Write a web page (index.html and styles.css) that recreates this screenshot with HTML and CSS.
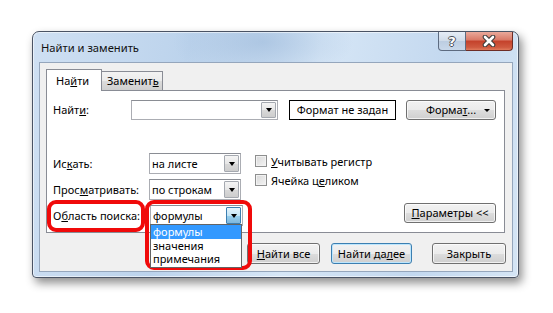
FILE: index.html
```html
<!DOCTYPE html>
<html lang="ru">
<head>
  <meta charset="UTF-8">
  <title>Найти и заменить</title>
  <link rel="stylesheet" href="styles.css">
</head>
<body>
  <div class="window">
    <div class="titlebar">
      <div class="title">Найти и заменить</div>
      <div class="title-buttons">
        <div class="help-btn">?</div>
        <div class="close-btn">
          <svg width="14" height="12" viewBox="0 0 14 12">
            <path d="M3 2 L11 10 M11 2 L3 10" stroke="#3b3b3b" stroke-width="4.6" stroke-linecap="round"/>
            <path d="M3 2 L11 10 M11 2 L3 10" stroke="#fff" stroke-width="2.6" stroke-linecap="round"/>
          </svg>
        </div>
      </div>
    </div>

    <div class="client">
      <div class="tabs">
        <div class="tab active">На<u>й</u>ти</div>
        <div class="tab">Заменит<u>ь</u></div>
      </div>

      <div class="panel">
        <div class="find-row">
          <div class="label find-label">Найт<u>и</u>:</div>
          <div class="find-input">
            <span class="field"></span>
            <span class="arrow-btn"></span>
          </div>
          <div class="format-box">Формат не задан</div>
          <div class="btn format-btn">Форма<u>т</u>...<span class="small-arrow"></span></div>
        </div>

        <div class="options">
          <div class="combo-col">
            <div class="combo-row">
              <div class="label">Ис<u>к</u>ать:</div>
              <div class="combo"><span class="field">на листе</span><span class="arrow-btn"></span></div>
            </div>
            <div class="combo-row">
              <div class="label">Прос<u>м</u>атривать:</div>
              <div class="combo"><span class="field">по строкам</span><span class="arrow-btn"></span></div>
            </div>
            <div class="combo-row">
              <div class="label">О<u>б</u>ласть поиска:</div>
              <div class="combo open">
                <span class="field">формулы</span><span class="arrow-btn hot"></span>
                <ul class="drop-list">
                  <li class="selected">формулы</li>
                  <li>значения</li>
                  <li>примечания</li>
                </ul>
              </div>
            </div>
          </div>

          <div class="check-col">
            <label class="check"><span class="box"></span><span><u>У</u>читывать регистр</span></label>
            <label class="check"><span class="box"></span><span>Ячейка ц<u>е</u>ликом</span></label>
          </div>

          <div class="btn params-btn"><u>П</u>араметры &lt;&lt;</div>
        </div>
      </div>

      <div class="bottom-row">
        <div class="btn find-all"><u>Н</u>айти все</div>
        <div class="btn find-next default">Найти да<u>л</u>ее</div>
        <div class="btn close">Закрыть</div>
      </div>
    </div>
  </div>

  <!-- red marks drawn over the screenshot -->
  <div class="mark mark-label"></div>
  <div class="mark mark-combo"></div>
</body>
</html>
```

FILE: styles.css
```css
body {
  margin: 0;
  width: 553px;
  height: 313px;
  background: #fff;
  font-family: "Noto Sans", "Open Sans", sans-serif;
  font-size: 11px;
  color: #000;
  overflow: hidden;
  position: relative;
}

u {
  text-decoration: underline;
  text-underline-offset: 1px;
}

/* aero window */
.window {
  margin: 31px 0 0 32px;
  width: 487px;
  height: 247px;
  box-sizing: border-box;
  border: 1px solid #4a5364;
  border-radius: 7px 7px 4px 4px;
  background:
    radial-gradient(ellipse 90px 40px at 230px 10px, rgba(150, 180, 215, 0.55), transparent),
    linear-gradient(100deg, #cfe0f3 0%, #bcd3ec 30%, #d6e6f6 55%, #c3d8ef 80%, #d5e5f5 100%);
  box-shadow: 3px 5px 10px rgba(0, 0, 0, 0.45), inset 0 0 0 1px rgba(255, 255, 255, 0.55);
  display: flex;
  flex-direction: column;
}

.titlebar {
  height: 30px;
  display: flex;
  justify-content: space-between;
  align-items: flex-start;
}

.title {
  padding: 8px 0 0 8px;
  line-height: 16px;
  font-size: 11.2px;
  color: #111;
}

.title-buttons {
  display: flex;
  margin-right: 5px;
}

.help-btn,
.close-btn {
  height: 19px;
  box-sizing: border-box;
  border: 1px solid #5d6b80;
  border-top: none;
  display: flex;
  justify-content: center;
  align-items: center;
}

.help-btn {
  width: 28px;
  border-radius: 0 0 0 4px;
  background: linear-gradient(#e6edf6, #cfdbe9 50%, #bccde1 51%, #c9d8ea);
  color: #fff;
  font-family: "DejaVu Sans", sans-serif;
  font-size: 13px;
  font-weight: bold;
  line-height: 17px;
  text-shadow: -1px 0 #4a4f58, 1px 0 #4a4f58, 0 -1px #4a4f58, 0 1px #4a4f58;
}

.close-btn {
  width: 47px;
  border-left: none;
  border-color: #6e2d26;
  border-radius: 0 0 4px 0;
  background: linear-gradient(#eaa99b, #d97866 45%, #c4412b 50%, #cf5a40 85%, #e07a5c);
}

.close-btn svg {
  display: block;
}

/* dialog body */
.client {
  flex: 1;
  margin: 0 5px 5px 6px;
  border: 1px solid #95a6bc;
  background: #f0f0f0;
  display: flex;
  flex-direction: column;
}

.tabs {
  display: flex;
  align-items: flex-end;
  height: 21px;
  margin: 6px 0 0 6px;
}

.tab {
  box-sizing: border-box;
  height: 19px;
  width: 61px;
  padding-left: 5px;
  line-height: 18px;
  border: 1px solid #898c95;
  border-left: none;
  border-bottom: none;
  background: linear-gradient(#f3f3f3, #ebebeb 50%, #dcdcdc 51%, #cfcfcf);
}

.tab.active {
  position: relative;
  z-index: 1;
  height: 22px;
  width: 56px;
  margin-bottom: -1px;
  padding-left: 9px;
  line-height: 21px;
  border-left: 1px solid #898c95;
  background: #fff;
}

.panel {
  height: 143px;
  box-sizing: border-box;
  margin: 0 7px 0 6px;
  padding: 9px 8px 0 6px;
  border: 1px solid #898c95;
  background: #fff;
}

.label {
  width: 96px;
  line-height: 21px;
  white-space: nowrap;
}

.find-row {
  display: flex;
  height: 20px;
}

.find-label {
  width: 78px;
  line-height: 20px;
}

.find-input,
.combo {
  box-sizing: border-box;
  display: flex;
  border: 1px solid #abadb3;
  border-top-color: #8a8d94;
  background: #fff;
}

.find-input {
  width: 147px;
  height: 20px;
}

.field {
  flex: 1;
  padding-left: 2px;
  line-height: 19px;
  white-space: nowrap;
}

.arrow-btn {
  width: 15px;
  margin: 1px;
  box-sizing: border-box;
  border: 1px solid #a5a9b0;
  border-radius: 1px;
  background: linear-gradient(#f4f4f4, #e7e7e7 50%, #d9d9d9 51%, #cdcdcd);
  display: flex;
  justify-content: center;
  align-items: center;
}

.arrow-btn::after {
  content: '';
  border-left: 3.5px solid transparent;
  border-right: 3.5px solid transparent;
  border-top: 4px solid #000;
}

.arrow-btn.hot {
  border-color: #3c7fb1;
  background: linear-gradient(#e5f4fc, #c4e5f6 50%, #98d1ef 51%, #7fb7dd);
}

.format-box {
  margin-left: 11px;
  width: 107px;
  height: 20px;
  box-sizing: border-box;
  border: 1px solid #000;
  text-align: center;
  line-height: 18px;
  white-space: nowrap;
}

.btn {
  box-sizing: border-box;
  height: 21px;
  border: 1px solid #707070;
  border-radius: 3px;
  background: linear-gradient(#f2f2f2, #ebebeb 50%, #dddddd 51%, #cfcfcf);
  box-shadow: inset 0 0 0 1px rgba(255, 255, 255, 0.7);
  text-align: center;
  line-height: 19px;
  white-space: nowrap;
}

.format-btn {
  margin-left: 10px;
  width: 90px;
  height: 20px;
  line-height: 18px;
  position: relative;
}

.small-arrow {
  position: absolute;
  right: 5px;
  top: 8px;
  border-left: 3px solid transparent;
  border-right: 3px solid transparent;
  border-top: 3px solid #000;
}

.options {
  display: flex;
  margin-top: 33px;
}

.combo-col {
  display: flex;
  flex-direction: column;
  gap: 5px;
}

.combo-row {
  display: flex;
}

.combo {
  width: 92px;
  height: 21px;
  position: relative;
}

.combo.open {
  width: 93px;
  margin-left: 1px;
}

.drop-list {
  position: absolute;
  left: -1px;
  top: 18px;
  width: 92px;
  box-sizing: border-box;
  margin: 0;
  padding: 0 0 1px;
  list-style: none;
  border: 1px solid #646464;
  background: #fff;
  z-index: 2;
}

.drop-list li {
  height: 13.5px;
  line-height: 13px;
  padding-left: 2px;
}

.drop-list li.selected {
  background: #3399ff;
  color: #fff;
}

.check-col {
  margin-left: 12px;
  padding-top: 2px;
  display: flex;
  flex-direction: column;
  gap: 7px;
}

.check {
  display: flex;
  align-items: center;
  height: 12px;
  gap: 4px;
  white-space: nowrap;
}

.box {
  width: 12px;
  height: 12px;
  box-sizing: border-box;
  border: 1px solid #8e8f8f;
  background: linear-gradient(135deg, #d8d8d8, #f4f4f4);
  box-shadow: inset 0 0 0 1px #f2f2f2;
}

.params-btn {
  margin: 50px 0 0 auto;
  width: 92px;
  height: 20px;
  line-height: 18px;
}

.bottom-row {
  display: flex;
  justify-content: flex-end;
  margin: 10px 6px 0 0;
}

.find-all {
  width: 73px;
}

.find-next {
  width: 81px;
  margin-left: 11px;
}

.find-next.default {
  border-color: #3c7fb1;
  box-shadow: inset 0 0 0 1px #bde6fd;
}

.close {
  width: 74px;
  margin-left: 20px;
}

/* red highlight marks */
.mark {
  position: absolute;
  box-sizing: border-box;
  border: 4px solid #f00a0a;
  border-radius: 9px;
}

.mark-label {
  left: 47px;
  top: 200px;
  width: 98px;
  height: 32px;
}

.mark-combo {
  left: 145px;
  top: 200px;
  width: 107px;
  height: 70px;
}
```
